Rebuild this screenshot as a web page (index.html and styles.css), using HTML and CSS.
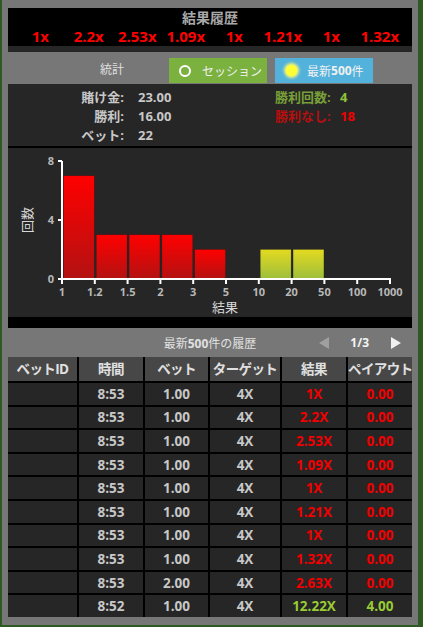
FILE: index.html
```html
<!DOCTYPE html>
<html lang="ja">
<head>
    <meta charset="UTF-8">
    <meta name="viewport" content="width=device-width, initial-scale=1.0">
    <title>結果履歴</title>
    <link rel="stylesheet" href="styles.css">
</head>
<body>
    <div class="panel">
        <div class="history">
            <div class="history-title">結果履歴</div>
            <div class="history-row">
                <span>1x</span>
                <span>2.2x</span>
                <span>2.53x</span>
                <span>1.09x</span>
                <span>1x</span>
                <span>1.21x</span>
                <span>1x</span>
                <span>1.32x</span>
            </div>
        </div>
        <div class="history-strip"></div>

        <div class="tabs">
            <span class="tabs-label">統計</span>
            <button class="tab tab-session"><span class="ring"></span>セッション</button>
            <button class="tab tab-latest"><span class="dot"></span>最新<b>500</b>件</button>
        </div>

        <div class="stats">
            <span class="stat-label">賭け金:</span>
            <span class="stat-value">23.00</span>
            <span class="stat-label2 win">勝利回数:</span>
            <span class="stat-value win-value">4</span>

            <span class="stat-label">勝利:</span>
            <span class="stat-value">16.00</span>
            <span class="stat-label2 lose">勝利なし:</span>
            <span class="stat-value lose-value">18</span>

            <span class="stat-label">ベット:</span>
            <span class="stat-value">22</span>
            <span></span>
            <span></span>
        </div>

        <div class="chart">
            <svg width="404" height="169" viewBox="0 0 404 169">
                <defs>
                    <linearGradient id="redBar" x1="0" y1="0" x2="0" y2="1">
                        <stop offset="0" stop-color="#ff0000"/>
                        <stop offset="1" stop-color="#b31212"/>
                    </linearGradient>
                    <linearGradient id="yellowBar" x1="0" y1="0" x2="0" y2="1">
                        <stop offset="0" stop-color="#e4da20"/>
                        <stop offset="1" stop-color="#9cbe3c"/>
                    </linearGradient>
                </defs>
                <g id="bars"></g>
                <g id="axis" stroke="#ffffff" stroke-width="2" fill="none"></g>
                <g id="labels" class="chart-labels"></g>
                <text class="axis-title" x="217" y="164" text-anchor="middle">結果</text>
                <text class="axis-title" transform="translate(24 72) rotate(-90)" text-anchor="middle">回数</text>
            </svg>
        </div>

        <div class="pager-row">
            <span></span>
            <span class="pager-title">最新<b>500</b>件の履歴</span>
            <div class="pager">
                <svg width="10" height="12" viewBox="0 0 10 12"><polygon points="10,0 10,12 0,6" fill="#a0a0a0"/></svg>
                <span class="pager-count">1/3</span>
                <svg width="10" height="12" viewBox="0 0 10 12"><polygon points="0,0 0,12 10,6" fill="#f0f0f0"/></svg>
            </div>
        </div>

        <table class="bets">
            <colgroup>
                <col style="width: 70px">
                <col style="width: 66px">
                <col style="width: 65px">
                <col style="width: 72px">
                <col style="width: 66px">
                <col style="width: 65px">
            </colgroup>
            <thead>
                <tr>
                    <th>ベットID</th>
                    <th>時間</th>
                    <th>ベット</th>
                    <th>ターゲット</th>
                    <th>結果</th>
                    <th>ペイアウト</th>
                </tr>
            </thead>
            <tbody id="betRows"></tbody>
        </table>
    </div>

    <script>
        // chart
        const ticks = ['1', '1.2', '1.5', '2', '3', '5', '10', '20', '50', '100', '1000'];
        const counts = [7, 3, 3, 3, 2, 0, 2, 2, 0, 0];
        const x0 = 54, step = 32.8, zeroY = 131, unit = 14.75;
        const ns = 'http://www.w3.org/2000/svg';
        const bars = document.getElementById('bars');
        const axis = document.getElementById('axis');
        const labels = document.getElementById('labels');

        function el(tag, attrs, parent) {
            const node = document.createElementNS(ns, tag);
            for (const key in attrs) node.setAttribute(key, attrs[key]);
            parent.appendChild(node);
            return node;
        }

        counts.forEach((count, i) => {
            if (!count) return;
            const h = count * unit;
            el('rect', {
                x: x0 + i * step + 1.5,
                y: zeroY - h,
                width: step - 2,
                height: h,
                fill: i < 6 ? 'url(#redBar)' : 'url(#yellowBar)',
                stroke: 'rgba(0,0,0,0.25)',
                'stroke-width': 0.6
            }, bars);
        });

        const xEnd = x0 + 10 * step;
        el('path', { d: `M${x0} 13 V${zeroY} H${xEnd + 1}` }, axis);
        ticks.forEach((t, i) => {
            const x = x0 + i * step;
            el('path', { d: `M${x} ${zeroY} v5` }, axis);
            const label = el('text', { x: x, y: 148, 'text-anchor': 'middle' }, labels);
            label.textContent = t;
        });
        [0, 4, 8].forEach(v => {
            const y = zeroY - v * unit;
            el('path', { d: `M${x0 - 4} ${y} H${x0}` }, axis);
            const label = el('text', { x: x0 - 8, y: y + 4, 'text-anchor': 'end' }, labels);
            label.textContent = v;
        });

        // table rows
        const rows = [
            ['8:53', '1.00', '1X', false],
            ['8:53', '1.00', '2.2X', false],
            ['8:53', '1.00', '2.53X', false],
            ['8:53', '1.00', '1.09X', false],
            ['8:53', '1.00', '1X', false],
            ['8:53', '1.00', '1.21X', false],
            ['8:53', '1.00', '1X', false],
            ['8:53', '1.00', '1.32X', false],
            ['8:53', '2.00', '2.63X', false],
            ['8:52', '1.00', '12.22X', true]
        ];
        const body = document.getElementById('betRows');
        rows.forEach(([time, bet, result, won]) => {
            const tr = document.createElement('tr');
            const cls = won ? 'won' : 'lost';
            const payout = won ? '4.00' : '0.00';
            tr.innerHTML = `<td></td><td>${time}</td><td>${bet}</td><td>4X</td>` +
                `<td class="${cls}">${result}</td><td class="${cls}">${payout}</td>`;
            body.appendChild(tr);
        });
    </script>
</body>
</html>
```

FILE: styles.css
```css
body {
    margin: 0;
    background-color: #2d5a22;
    font-family: "Open Sans", "Noto Sans CJK JP", sans-serif;
    color: #c8c8c8;
}

.panel {
    width: 404px;
    margin-left: 2px;
    padding: 8px 6px 8px 6px;
    background-color: #777777;
}

.history {
    background-color: #000;
    height: 38px;
    padding-top: 1px;
    box-sizing: border-box;
}

.history-title {
    text-align: center;
    font-size: 14px;
    font-weight: bold;
    line-height: 18px;
    color: #a8a8a8;
}

.history-row {
    display: grid;
    grid-template-columns: repeat(8, 1fr);
    padding: 0 8px;
    line-height: 18px;
    font-size: 15px;
    font-weight: bold;
    color: #ff0000;
    text-align: center;
}

.history-strip {
    height: 6px;
    background-color: #262626;
}

.tabs {
    display: flex;
    align-items: center;
    padding: 6px 0 0 92px;
    margin-bottom: 1px;
}

.tabs-label {
    width: 69px;
    font-size: 12px;
    color: #e0e0e0;
    margin-top: -4px;
}

.tab {
    display: flex;
    align-items: center;
    width: 98px;
    height: 25px;
    border: none;
    padding: 0 0 0 10px;
    font-family: inherit;
    font-size: 12px;
    color: #f0f0f0;
    cursor: pointer;
}

.tab + .tab {
    margin-left: 8px;
}

.tab-session {
    background-color: #7bb13e;
}

.tab-latest {
    background-color: #52b2dc;
}

.ring {
    width: 8px;
    height: 8px;
    border: 2px solid #fff;
    border-radius: 50%;
    margin-right: 11px;
}

.dot {
    width: 11px;
    height: 11px;
    margin-left: 1px;
    background-color: #ffff33;
    border-radius: 50%;
    box-shadow: 0 0 3px 2px #f8f870;
    margin-right: 10px;
}

.stats {
    display: grid;
    grid-template-columns: 116px 151px 65px 1fr;
    grid-auto-rows: 19px;
    align-items: center;
    padding: 3px 0 2px;
    background-color: #262626;
    border-bottom: 2px solid #000;
    font-size: 13px;
    font-weight: bold;
}

.stat-label {
    text-align: right;
}

.stat-value {
    padding-left: 14px;
}

.stat-label2.win {
    color: #789f38;
}

.stat-label2.lose {
    color: #b50f0f;
}

.win-value {
    padding-left: 0;
    color: #8fc23a;
}

.lose-value {
    padding-left: 0;
    color: #ee0000;
}

.chart {
    height: 169px;
    background-color: #262626;
    border-bottom: 11px solid #000;
}

.chart svg {
    display: block;
}

.chart-labels text {
    font-size: 11px;
    font-weight: bold;
    fill: #b8b8b8;
}

.axis-title {
    font-size: 13px;
    fill: #d8d8d8;
}

.pager-row {
    display: grid;
    grid-template-columns: 1fr auto 1fr;
    align-items: center;
    height: 29px;
    font-size: 12px;
}

.pager-title {
    color: #e0e0e0;
}

.pager {
    display: flex;
    align-items: center;
    justify-content: flex-end;
    padding-right: 11px;
}

.pager svg {
    display: block;
}

.pager-count {
    margin: 0 22px 0 21px;
    font-weight: bold;
    color: #f4f4f4;
}

.bets {
    width: 404px;
    border-collapse: collapse;
    border-style: hidden;
    table-layout: fixed;
    font-size: 13.5px;
    font-weight: bold;
    text-align: center;
    line-height: 16px;
}

.bets th,
.bets td {
    border: 2px solid #000;
    padding: 0;
    white-space: nowrap;
}

.bets th {
    height: 24px;
    background-color: #474747;
    color: #e0e0e0;
    letter-spacing: -0.6px;
}

.bets td {
    height: 21.6px;
    background-color: #262626;
    color: #c8c8c8;
}

.bets td.lost {
    color: #f00000;
}

.bets td.won {
    color: #9acb34;
}
```
